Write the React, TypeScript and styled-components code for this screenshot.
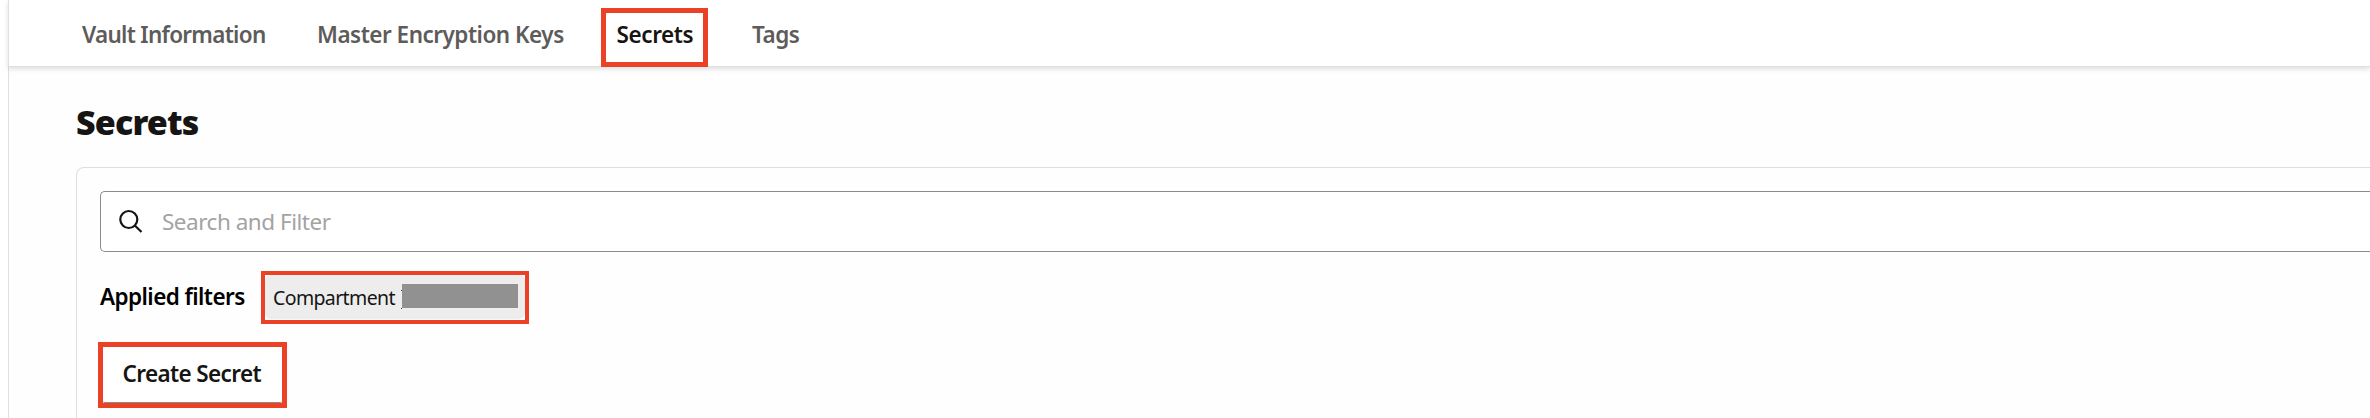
import React from 'react';
import styled, { createGlobalStyle } from 'styled-components';

const colors = {
  ink: '#161513',
  muted: '#5e5c5a',
  placeholder: '#a3a3a3',
  line: '#dfdfdf',
  field: '#8b8b8b',
  callout: '#ea4127',
  chip: '#ededed',
  redaction: '#919191',
};

const GlobalStyle = createGlobalStyle`
  * { box-sizing: border-box; }
  body {
    margin: 0;
    background: #fff;
    color: ${colors.ink};
    font-family: 'Noto Sans', 'Open Sans', sans-serif;
    overflow: hidden;
  }
`;

const Page = styled.div`
  height: 418px;
  padding-left: 8px;
  overflow: hidden;
`;

const Main = styled.main`
  display: flex;
  flex-direction: column;
  height: 100%;
  border-left: 1px solid ${colors.line};
  background: #fefefe;
`;

const TabBar = styled.nav`
  display: flex;
  flex: none;
  gap: 28.5px;
  height: 67px;
  margin-left: -1px;
  padding: 8px 0 0 57.5px;
  background: #fff;
  border: solid ${colors.line};
  border-width: 0 0 1px 1px;
  box-shadow: 0 2px 5px rgba(0, 0, 0, 0.13);
`;

const Tab = styled.a<{ $width: number; $tracking: number; $active?: boolean }>`
  flex: none;
  width: ${(p) => p.$width}px;
  height: 59px;
  padding-left: 10.5px;
  border: 5px solid ${(p) => (p.$active ? colors.callout : 'transparent')};
  color: ${(p) => (p.$active ? colors.ink : colors.muted)};
  font-size: 22.5px;
  font-weight: 600;
  line-height: 43px;
  letter-spacing: ${(p) => p.$tracking}px;
  white-space: nowrap;
`;

const Title = styled.h1`
  flex: none;
  margin: 31px 0 21px 67px;
  font-size: 34px;
  font-weight: 900;
  line-height: 48px;
  letter-spacing: -0.85px;
`;

const Panel = styled.section`
  flex: 1;
  margin-left: 67px;
  padding: 23px 0 0 23px;
  border: solid ${colors.line};
  border-width: 1px 0 0 1px;
  border-top-left-radius: 8px;
`;

const SearchField = styled.div`
  display: flex;
  align-items: center;
  height: 61px;
  padding-left: 17px;
  border: solid ${colors.field};
  border-width: 1px 0 1px 1px;
  border-radius: 5px 0 0 5px;
  background: #fff;
`;

const SearchIcon = styled.svg`
  flex: none;
  width: 26px;
  height: 26px;
`;

const Placeholder = styled.span`
  margin-left: 18px;
  color: ${colors.placeholder};
  font-size: 22.5px;
  line-height: 59px;
  letter-spacing: -0.48px;
`;

const FilterRow = styled.div`
  display: flex;
  margin-top: 19px;
`;

const FilterLabel = styled.span`
  width: 161px;
  color: #000;
  font-size: 22.5px;
  font-weight: 600;
  line-height: 51px;
  letter-spacing: -0.58px;
`;

const FilterCallout = styled.div`
  width: 268px;
  height: 53px;
  padding-bottom: 1px;
  border: 4px solid ${colors.callout};
  background: #fff;
`;

const FilterChip = styled.div`
  display: flex;
  height: 44px;
  padding-left: 8px;
  background: ${colors.chip};
  border-radius: 6px;
`;

const ChipText = styled.span`
  width: 129px;
  font-size: 19.5px;
  line-height: 45px;
  letter-spacing: -0.62px;
`;

const Redaction = styled.span`
  position: relative;
  width: 116px;
  height: 24px;
  margin-top: 9px;
  background: ${colors.redaction};

  &::before {
    content: '';
    position: absolute;
    left: -1px;
    top: 6px;
    width: 1px;
    height: 17px;
    border: solid #444;
    border-width: 1px 0;
  }
`;

const ActionCallout = styled.div`
  width: 189px;
  height: 66px;
  margin: 18px 0 0 -2px;
  border: 5px solid ${colors.callout};
`;

const ActionButton = styled.button`
  display: block;
  width: 100%;
  height: 56px;
  padding: 0 0 1px 19.5px;
  background: #fff;
  border: 0;
  border-bottom: 1px solid ${colors.field};
  border-radius: 2px;
  color: ${colors.ink};
  font: 600 22.5px/54px 'Noto Sans', 'Open Sans', sans-serif;
  letter-spacing: -0.62px;
  text-align: left;
`;

export default function App() {
  return (
    <Page>
      <GlobalStyle />
      <Main>
        <TabBar>
          <Tab $width={206.5} $tracking={-0.72}>Vault Information</Tab>
          <Tab $width={271} $tracking={-0.5}>Master Encryption Keys</Tab>
          <Tab $width={107} $tracking={-0.4} $active>Secrets</Tab>
          <Tab $width={80} $tracking={-0.5}>Tags</Tab>
        </TabBar>
        <Title>Secrets</Title>
        <Panel>
          <SearchField>
            <SearchIcon viewBox="0 0 26 26" fill="none" stroke={colors.ink} strokeWidth="2.2">
              <circle cx="10.8" cy="10.5" r="8.5" />
              <path d="M16.8 16.5 L23.5 23" />
            </SearchIcon>
            <Placeholder>Search and Filter</Placeholder>
          </SearchField>
          <FilterRow>
            <FilterLabel>Applied filters</FilterLabel>
            <FilterCallout>
              <FilterChip>
                <ChipText>Compartment</ChipText>
                <Redaction />
              </FilterChip>
            </FilterCallout>
          </FilterRow>
          <ActionCallout>
            <ActionButton>Create Secret</ActionButton>
          </ActionCallout>
        </Panel>
      </Main>
    </Page>
  );
}
